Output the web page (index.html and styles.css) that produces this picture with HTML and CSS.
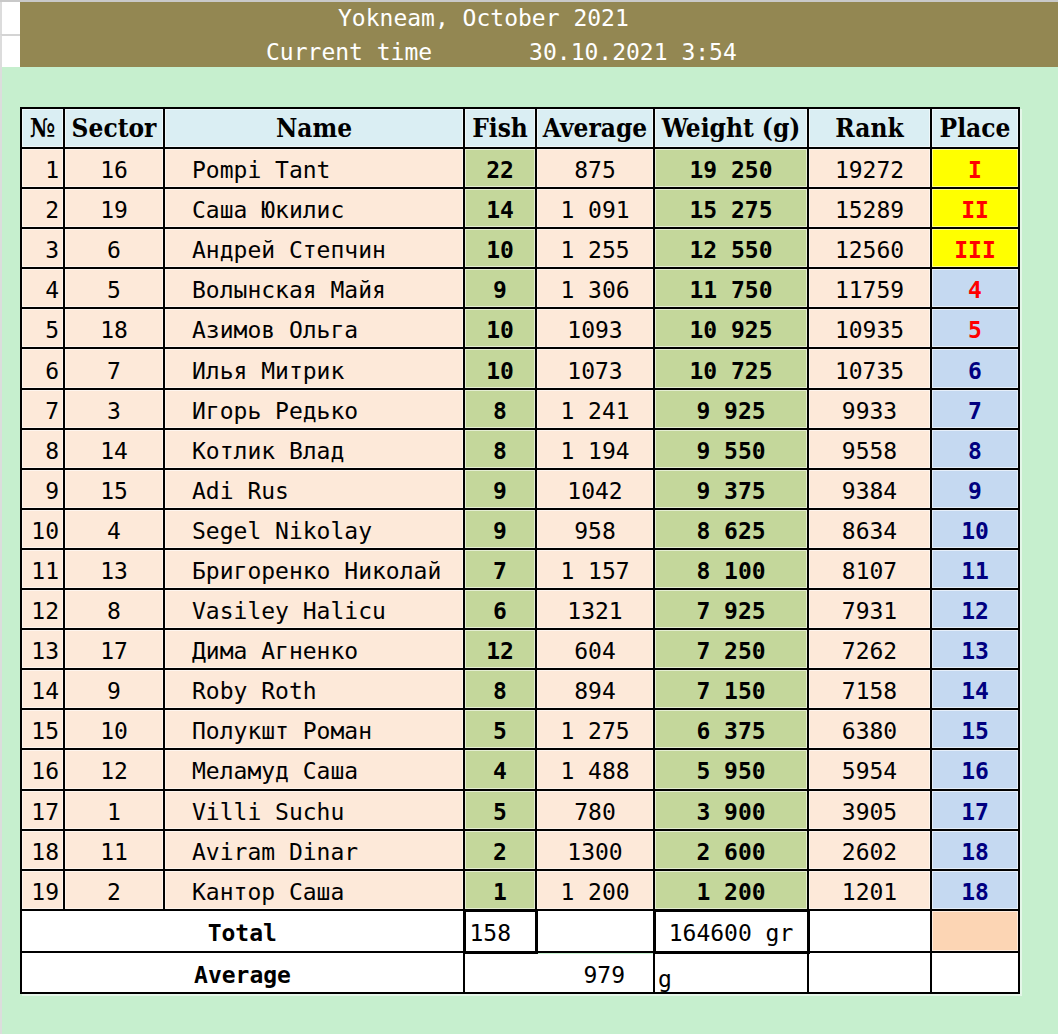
FILE: index.html
```html
<!DOCTYPE html>
<html>
<head>
<meta charset="utf-8">
<title>Yokneam, October 2021</title>
<link rel="stylesheet" href="styles.css">
</head>
<body>
<div class="sheet">
  <div class="top">
    <div class="gutter"><div class="gcell"></div><div class="gcell"></div></div>
    <div class="banner">
      <div class="bline l1">Yokneam, October 2021</div>
      <div class="bline l2">Current time       30.10.2021 3:54</div>
    </div>
  </div>
  <div class="field">
    <table class="results">
      <colgroup>
        <col class="c-no"><col class="c-sector"><col class="c-name"><col class="c-fish"><col class="c-avg"><col class="c-weight"><col class="c-rank"><col class="c-place">
      </colgroup>
      <thead>
        <tr><th>№</th><th>Sector</th><th>Name</th><th>Fish</th><th>Average</th><th>Weight (g)</th><th>Rank</th><th>Place</th></tr>
      </thead>
      <tbody>
        <tr><td class="no">1</td><td class="sec">16</td><td class="name">Pompi Tant</td><td class="fish">22</td><td class="avg">875</td><td class="wt">19 250</td><td class="rank">19272</td><td class="place top3">I</td></tr>
        <tr><td class="no">2</td><td class="sec">19</td><td class="name">Саша Юкилис</td><td class="fish">14</td><td class="avg">1 091</td><td class="wt">15 275</td><td class="rank">15289</td><td class="place top3">II</td></tr>
        <tr><td class="no">3</td><td class="sec">6</td><td class="name">Андрей Степчин</td><td class="fish">10</td><td class="avg">1 255</td><td class="wt">12 550</td><td class="rank">12560</td><td class="place top3">III</td></tr>
        <tr><td class="no">4</td><td class="sec">5</td><td class="name">Волынская Майя</td><td class="fish">9</td><td class="avg">1 306</td><td class="wt">11 750</td><td class="rank">11759</td><td class="place red">4</td></tr>
        <tr><td class="no">5</td><td class="sec">18</td><td class="name">Азимов Ольга</td><td class="fish">10</td><td class="avg">1093</td><td class="wt">10 925</td><td class="rank">10935</td><td class="place red">5</td></tr>
        <tr><td class="no">6</td><td class="sec">7</td><td class="name">Илья Митрик</td><td class="fish">10</td><td class="avg">1073</td><td class="wt">10 725</td><td class="rank">10735</td><td class="place">6</td></tr>
        <tr><td class="no">7</td><td class="sec">3</td><td class="name">Игорь Редько</td><td class="fish">8</td><td class="avg">1 241</td><td class="wt">9 925</td><td class="rank">9933</td><td class="place">7</td></tr>
        <tr><td class="no">8</td><td class="sec">14</td><td class="name">Котлик Влад</td><td class="fish">8</td><td class="avg">1 194</td><td class="wt">9 550</td><td class="rank">9558</td><td class="place">8</td></tr>
        <tr><td class="no">9</td><td class="sec">15</td><td class="name">Adi Rus</td><td class="fish">9</td><td class="avg">1042</td><td class="wt">9 375</td><td class="rank">9384</td><td class="place">9</td></tr>
        <tr><td class="no">10</td><td class="sec">4</td><td class="name">Segel Nikolay</td><td class="fish">9</td><td class="avg">958</td><td class="wt">8 625</td><td class="rank">8634</td><td class="place">10</td></tr>
        <tr><td class="no">11</td><td class="sec">13</td><td class="name">Бригоренко Николай</td><td class="fish">7</td><td class="avg">1 157</td><td class="wt">8 100</td><td class="rank">8107</td><td class="place">11</td></tr>
        <tr><td class="no">12</td><td class="sec">8</td><td class="name">Vasiley Halicu</td><td class="fish">6</td><td class="avg">1321</td><td class="wt">7 925</td><td class="rank">7931</td><td class="place">12</td></tr>
        <tr><td class="no">13</td><td class="sec">17</td><td class="name">Дима Агненко</td><td class="fish">12</td><td class="avg">604</td><td class="wt">7 250</td><td class="rank">7262</td><td class="place">13</td></tr>
        <tr><td class="no">14</td><td class="sec">9</td><td class="name">Roby Roth</td><td class="fish">8</td><td class="avg">894</td><td class="wt">7 150</td><td class="rank">7158</td><td class="place">14</td></tr>
        <tr><td class="no">15</td><td class="sec">10</td><td class="name">Полукшт Роман</td><td class="fish">5</td><td class="avg">1 275</td><td class="wt">6 375</td><td class="rank">6380</td><td class="place">15</td></tr>
        <tr><td class="no">16</td><td class="sec">12</td><td class="name">Меламуд Саша</td><td class="fish">4</td><td class="avg">1 488</td><td class="wt">5 950</td><td class="rank">5954</td><td class="place">16</td></tr>
        <tr><td class="no">17</td><td class="sec">1</td><td class="name">Villi Suchu</td><td class="fish">5</td><td class="avg">780</td><td class="wt">3 900</td><td class="rank">3905</td><td class="place">17</td></tr>
        <tr><td class="no">18</td><td class="sec">11</td><td class="name">Aviram Dinar</td><td class="fish">2</td><td class="avg">1300</td><td class="wt">2 600</td><td class="rank">2602</td><td class="place">18</td></tr>
        <tr><td class="no">19</td><td class="sec">2</td><td class="name">Кантор Саша</td><td class="fish">1</td><td class="avg">1 200</td><td class="wt">1 200</td><td class="rank">1201</td><td class="place">18</td></tr>
      </tbody>
      <tfoot>
        <tr class="total"><td colspan="3" class="label">Total</td><td class="boxed sum">158</td><td></td><td class="boxed">164600 gr</td><td></td><td class="orange"></td></tr>
        <tr class="average"><td colspan="3" class="label">Average</td><td colspan="2" class="avgval">979</td><td class="unit">g</td><td></td><td></td></tr>
      </tfoot>
    </table>
  </div>
</div>
</body>
</html>
```
FILE: styles.css
```css
html, body {
  margin: 0;
  padding: 0;
}
body {
  width: 1058px;
  height: 1034px;
  overflow: hidden;
  background: #c6efce;
  font-family: "DejaVu Sans Mono", "Liberation Mono", monospace;
}
.sheet {
  display: flex;
  flex-direction: column;
  height: 1034px;
}
.top {
  display: flex;
  border-top: 2px solid #c9c9c9;
  height: 65px;
}
.gutter {
  width: 20px;
  display: flex;
  flex-direction: column;
  background: #ffffff;
}
.gcell {
  flex: 1;
  border-left: 2px solid #dcdcdc;
}
.gcell + .gcell {
  border-top: 2px solid #d4d4d4;
}
.banner {
  flex: 1;
  background: #938752;
  display: flex;
  flex-direction: column;
  color: #ffffff;
  font-size: 23px;
}
.bline {
  flex: 1;
  display: flex;
  align-items: center;
  white-space: pre;
}
.l1 { padding-left: 318px; padding-top: 1px; }
.l2 { padding-left: 246px; padding-top: 3px; }

.field {
  flex: 1;
  border-left: 2px solid #dcdcdc;
  padding: 40px 0 0 18px;
}
.results {
  border-collapse: collapse;
  table-layout: fixed;
  width: 998px;
  border: 2px solid #000;
  box-shadow: 2px 2px 0 #e4f6e8;
}
.c-no { width: 43px; }
.c-sector { width: 100px; }
.c-name { width: 300px; }
.c-fish { width: 72px; }
.c-avg { width: 118px; }
.c-weight { width: 154px; }
.c-rank { width: 123px; }
.c-place { width: 88px; }

.results th,
.results td {
  border: 2px solid #000;
  padding: 0;
  box-shadow: inset 0 0 0 1px rgba(255, 255, 255, 0.55);
  white-space: pre;
  overflow: hidden;
}
.results th {
  height: 38px;
  background: #daeef3;
  font-family: "DejaVu Serif", "Liberation Serif", serif;
  font-stretch: condensed;
  font-weight: bold;
  font-size: 26px;
  color: #000;
  text-align: center;
}
.results tbody td {
  height: 34.1px;
  padding-top: 4px;
  background: #fde9d9;
  font-size: 23px;
  color: #000;
  text-align: center;
}
.results td.no {
  text-align: right;
  padding-right: 4px;
}
.results td.name {
  text-align: left;
  padding-left: 27px;
}
.results td.fish,
.results td.wt {
  background: #c4d79b;
  font-weight: bold;
}
.results td.place {
  background: #c5d9f1;
  color: #000080;
  font-weight: bold;
}
.results td.place.top3 {
  background: #ffff00;
  color: #ff0000;
}
.results td.place.red {
  color: #ff0000;
}
.results tfoot td {
  background: #ffffff;
  font-size: 23px;
  color: #000;
  text-align: center;
  padding-top: 4px;
}
.results tr.total td { height: 35px; }
.results tr.average td { height: 34px; }
.results td.label {
  font-weight: bold;
}
.results td.boxed {
  border: 3px solid #000;
}
.results td.sum {
  text-align: left;
  padding-left: 4px;
}
.results td.orange {
  background: #fcd5b4;
}
.results td.avgval {
  text-align: right;
  padding-right: 28px;
}
.results td.unit {
  text-align: left;
  padding-left: 3px;
  vertical-align: bottom;
}
```
